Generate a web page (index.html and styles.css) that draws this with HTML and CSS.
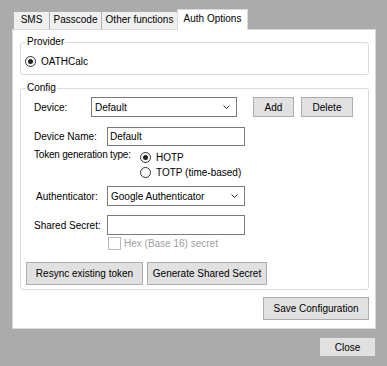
FILE: index.html
```html
<!DOCTYPE html>
<html>
<head>
<meta charset="utf-8">
<link rel="stylesheet" href="styles.css">
</head>
<body>
<div class="dialog">
  <div class="tabs">
    <div class="tab w-sms">SMS</div>
    <div class="tab w-pass">Passcode</div>
    <div class="tab w-other">Other functions</div>
    <div class="tab active">Auth Options</div>
  </div>
  <div class="panel">
    <div class="group provider">
      <span class="legend">Provider</span>
      <div class="radio-row prov-radio"><span class="radio checked"></span><span>OATHCalc</span></div>
    </div>
    <div class="group config">
      <span class="legend legend-config">Config</span>
      <div class="row device-row">
        <span class="lbl lbl-short">Device:</span>
        <div class="select select-device"><span>Default</span><svg class="chev" width="7" height="4" viewBox="0 0 7 4"><polyline points="0.5,0.5 3.5,3.5 6.5,0.5" fill="none" stroke="#333" stroke-width="1"/></svg></div>
        <button class="btn btn-add">Add</button>
        <button class="btn btn-del">Delete</button>
      </div>
      <div class="row name-row">
        <span class="lbl">Device Name:</span>
        <div class="input">Default</div>
      </div>
      <div class="row token-row">
        <span class="lbl lbl-token">Token generation type:</span>
        <div class="radios">
          <div class="radio-row"><span class="radio checked"></span><span>HOTP</span></div>
          <div class="radio-row"><span class="radio"></span><span>TOTP (time-based)</span></div>
        </div>
      </div>
      <div class="row auth-row">
        <span class="lbl lbl-auth">Authenticator:</span>
        <div class="select select-auth"><span>Google Authenticator</span><svg class="chev" width="7" height="4" viewBox="0 0 7 4"><polyline points="0.5,0.5 3.5,3.5 6.5,0.5" fill="none" stroke="#333" stroke-width="1"/></svg></div>
      </div>
      <div class="row secret-row">
        <span class="lbl">Shared Secret:</span>
        <div class="input input-secret"></div>
      </div>
      <div class="row hex-row">
        <span class="checkbox"></span><span class="disabled">Hex (Base 16) secret</span>
      </div>
      <div class="row btn-row">
        <button class="btn btn-resync">Resync existing token</button>
        <button class="btn btn-gen">Generate Shared Secret</button>
      </div>
    </div>
    <div class="save-row">
      <button class="btn btn-save">Save Configuration</button>
    </div>
  </div>
  <div class="footer">
    <button class="btn btn-close">Close</button>
  </div>
</div>
</body>
</html>
```
FILE: styles.css
```css
* { box-sizing: border-box; }
html, body {
  margin: 0;
  padding: 0;
}
body {
  width: 387px;
  height: 366px;
  background: #ababab;
  font-family: "Liberation Sans", Arial, sans-serif;
  font-size: 10px;
  color: #000;
  overflow: hidden;
}
.dialog {
  padding: 9px 0 0 12px;
  width: 376px;
}
.tabs {
  display: flex;
  align-items: flex-end;
  height: 21px;
  margin: 0 0 -1px 1px;
}
.tab {
  height: 18px;
  margin-bottom: 1px;
  background: #f0f0f0;
  border: 1px solid #adadad;
  border-right: none;
  border-bottom: none;
  text-align: center;
  line-height: 16px;
}
.w-sms { width: 36px; }
.w-pass { width: 52px; }
.w-other { width: 76px; }
.tab.active {
  width: 71px;
  height: 21px;
  margin-bottom: 0;
  background: #fff;
  border: 1px solid #d9d9d9;
  border-bottom: none;
  position: relative;
  z-index: 2;
  line-height: 17px;
}
.panel {
  position: relative;
  z-index: 1;
  width: 364px;
  height: 300px;
  background: #fff;
  border: 1px solid #d9d9d9;
  padding: 0 6px 0 7px;
}
.group {
  border: 1px solid #dcdcdc;
  border-radius: 3px;
}
.legend {
  display: block;
  width: fit-content;
  height: 14px;
  line-height: 14px;
  margin: -8px 0 0 5px;
  padding: 0 1px;
  background: #fff;
}
.legend-config { margin-left: -8px; }
.provider {
  margin-top: 12px;
  height: 33px;
}
.prov-radio {
  margin: 5px 0 0 4px;
}
.config {
  margin-top: 13px;
  height: 202px;
  padding-left: 13px;
}
.radio-row {
  display: flex;
  align-items: center;
  height: 14px;
}
.radio {
  width: 11px;
  height: 11px;
  border: 1px solid #333;
  border-radius: 50%;
  margin-right: 5px;
  display: flex;
  align-items: center;
  justify-content: center;
  flex: none;
}
.radio.checked::after {
  content: "";
  width: 5px;
  height: 5px;
  border-radius: 50%;
  background: #222;
}
.row {
  display: flex;
  align-items: center;
}
.lbl { width: 73px; flex: none; }
.lbl-short { width: 57px; }
.lbl-auth { padding-left: 2px; }
.device-row { margin-top: 2px; height: 20px; }
.select {
  height: 20px;
  border: 1px solid #7a7a7a;
  background: #fff;
  display: flex;
  align-items: center;
  justify-content: space-between;
  padding: 0 6px 0 3px;
}
.select-device { width: 146px; }
.select-auth { width: 138px; }
.chev { flex: none; }
.btn {
  font-family: inherit;
  font-size: 10px;
  color: #000;
  background: #e1e1e1;
  border: 1px solid #adadad;
  padding: 0;
  margin: 0;
  height: 20px;
}
.btn-add { width: 41px; margin-left: 16px; }
.btn-del { width: 52px; margin-left: 7px; }
.name-row { margin-top: 10px; }
.input {
  width: 138px;
  height: 19px;
  border: 1px solid #7a7a7a;
  background: #fff;
  padding-left: 2px;
  line-height: 17px;
}
.token-row {
  margin-top: 4px;
  align-items: flex-start;
}
.lbl-token {
  width: 106px;
  margin-top: -2px;
  line-height: 14px;
  letter-spacing: -0.2px;
}
.radios {
  display: flex;
  flex-direction: column;
  gap: 1px;
}
.auth-row { margin-top: 7px; }
.secret-row { margin-top: 9px; }
.input-secret { height: 20px; }
.hex-row {
  margin-top: 2px;
  padding-left: 74px;
  height: 13px;
}
.checkbox {
  width: 13px;
  height: 13px;
  border: 1px solid #bcbcbc;
  background: #fff;
  margin-right: 3px;
  flex: none;
}
.disabled { color: #a0a0a0; }
.btn-row {
  margin: 12px 0 0 -8px;
  gap: 4px;
}
.btn-resync { width: 117px; height: 23px; }
.btn-gen { width: 120px; height: 23px; }
.save-row {
  display: flex;
  justify-content: flex-end;
  margin-top: 7px;
}
.btn-save { width: 106px; height: 23px; }
.footer {
  display: flex;
  justify-content: flex-end;
  margin-top: 8px;
}
.btn-close { width: 57px; height: 20px; }
```
